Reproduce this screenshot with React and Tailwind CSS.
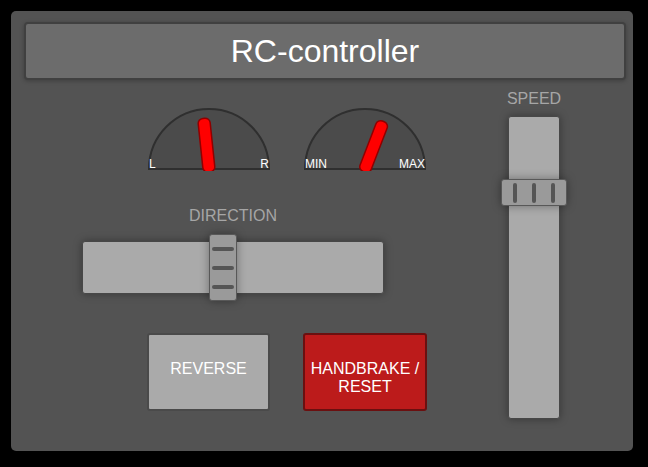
import React from "react"

function Gauge({ left, right, angle }) {
    return (
        <svg width="124" height="64" viewBox="0 0 124 64">
            <path d="M2 62 A60 60 0 0 1 122 62 Z" fill="#4b4b4b" stroke="#2f2f2f" strokeWidth="2" />
            <g transform={`translate(62 62) rotate(${angle})`}>
                <rect x="-6" y="-51" width="12" height="54" rx="5" fill="#ff0000" stroke="#8f0000" strokeWidth="1.5" />
            </g>
            <text x="2" y="61" fill="#ffffff" fontSize="12" fontFamily="Liberation Sans, Arial, sans-serif">{left}</text>
            <text x="122" y="61" fill="#ffffff" fontSize="12" textAnchor="end" fontFamily="Liberation Sans, Arial, sans-serif">{right}</text>
        </svg>
    )
}

export default function App() {
    return (
        <div className="w-[648px] h-[467px] bg-black pt-[11px] pl-[11px] font-['Liberation_Sans',Arial,sans-serif]">
            <div className="w-[622px] h-[440px] rounded-[5px] bg-[#535353] pl-[13px] pr-[7px] pt-[11px]">
                <div className="h-[58px] w-full flex items-center justify-center rounded-[4px] border-2 border-[#404040] bg-[#6c6c6c] text-white text-[32px] shadow-[0_1px_4px_rgba(0,0,0,0.25)]">
                    RC-controller
                </div>
                <div className="flex">
                    {/* left column */}
                    <div className="w-[477px] flex flex-col">
                        <div className="flex ml-[123px] mt-[27px] gap-[32px] h-[64px]">
                            <Gauge left="L" right="R" angle={-6} />
                            <Gauge left="MIN" right="MAX" angle={21} />
                        </div>
                        <div className="ml-[58px] w-[302px] flex flex-col">
                            <p className="mt-[36px] text-center text-[16px] leading-[18px] text-[#a6a6a6]">DIRECTION</p>
                            <div className="relative mt-[16px] h-[53px] w-[302px] rounded-[3px] border border-[#474747] bg-[#aaaaaa] shadow-[0_0_8px_rgba(0,0,0,0.35)]">
                                <div className="absolute left-[126px] top-[-8px] w-[28px] h-[67px] rounded-[3px] border border-[#585858] bg-[#9a9a9a] flex flex-col items-center justify-center gap-[15px] shadow-[0_0_10px_rgba(0,0,0,0.35)]">
                                    <div className="h-[4px] w-[22px] rounded-full bg-[#555]" />
                                    <div className="h-[4px] w-[22px] rounded-full bg-[#555]" />
                                    <div className="h-[4px] w-[22px] rounded-full bg-[#555]" />
                                </div>
                            </div>
                        </div>
                        <div className="flex items-start ml-[123px] mt-[39px] gap-[33px]">
                            <button className="w-[123px] h-[78px] rounded-[3px] border-2 border-[#4a4a4a] bg-[#aaaaaa] text-white text-[16px] leading-[18px] pt-[25px] flex justify-center">
                                REVERSE
                            </button>
                            <button className="w-[124px] h-[78px] rounded-[3px] border-2 border-[#6b1010] bg-[#bc1b1b] text-white text-[16px] leading-[18px] pt-[25px] flex flex-col items-center justify-start">
                                <span>HANDBRAKE /</span>
                                <span>RESET</span>
                            </button>
                        </div>
                    </div>
                    {/* right column */}
                    <div className="w-[66px] flex flex-col items-center">
                        <p className="mt-[10px] text-[16px] leading-[18px] text-[#a6a6a6]">SPEED</p>
                        <div className="relative mt-[8px] w-[52px] h-[303px] rounded-[3px] border border-[#474747] bg-[#aaaaaa] shadow-[0_0_8px_rgba(0,0,0,0.35)]">
                            <div className="absolute left-[-8px] top-[62px] w-[66px] h-[27px] rounded-[3px] border border-[#585858] bg-[#9a9a9a] flex items-center justify-center gap-[15px] shadow-[0_0_10px_rgba(0,0,0,0.35)]">
                                <div className="w-[4px] h-[20px] rounded-full bg-[#555]" />
                                <div className="w-[4px] h-[20px] rounded-full bg-[#555]" />
                                <div className="w-[4px] h-[20px] rounded-full bg-[#555]" />
                            </div>
                        </div>
                    </div>
                </div>
            </div>
        </div>
    )
}
